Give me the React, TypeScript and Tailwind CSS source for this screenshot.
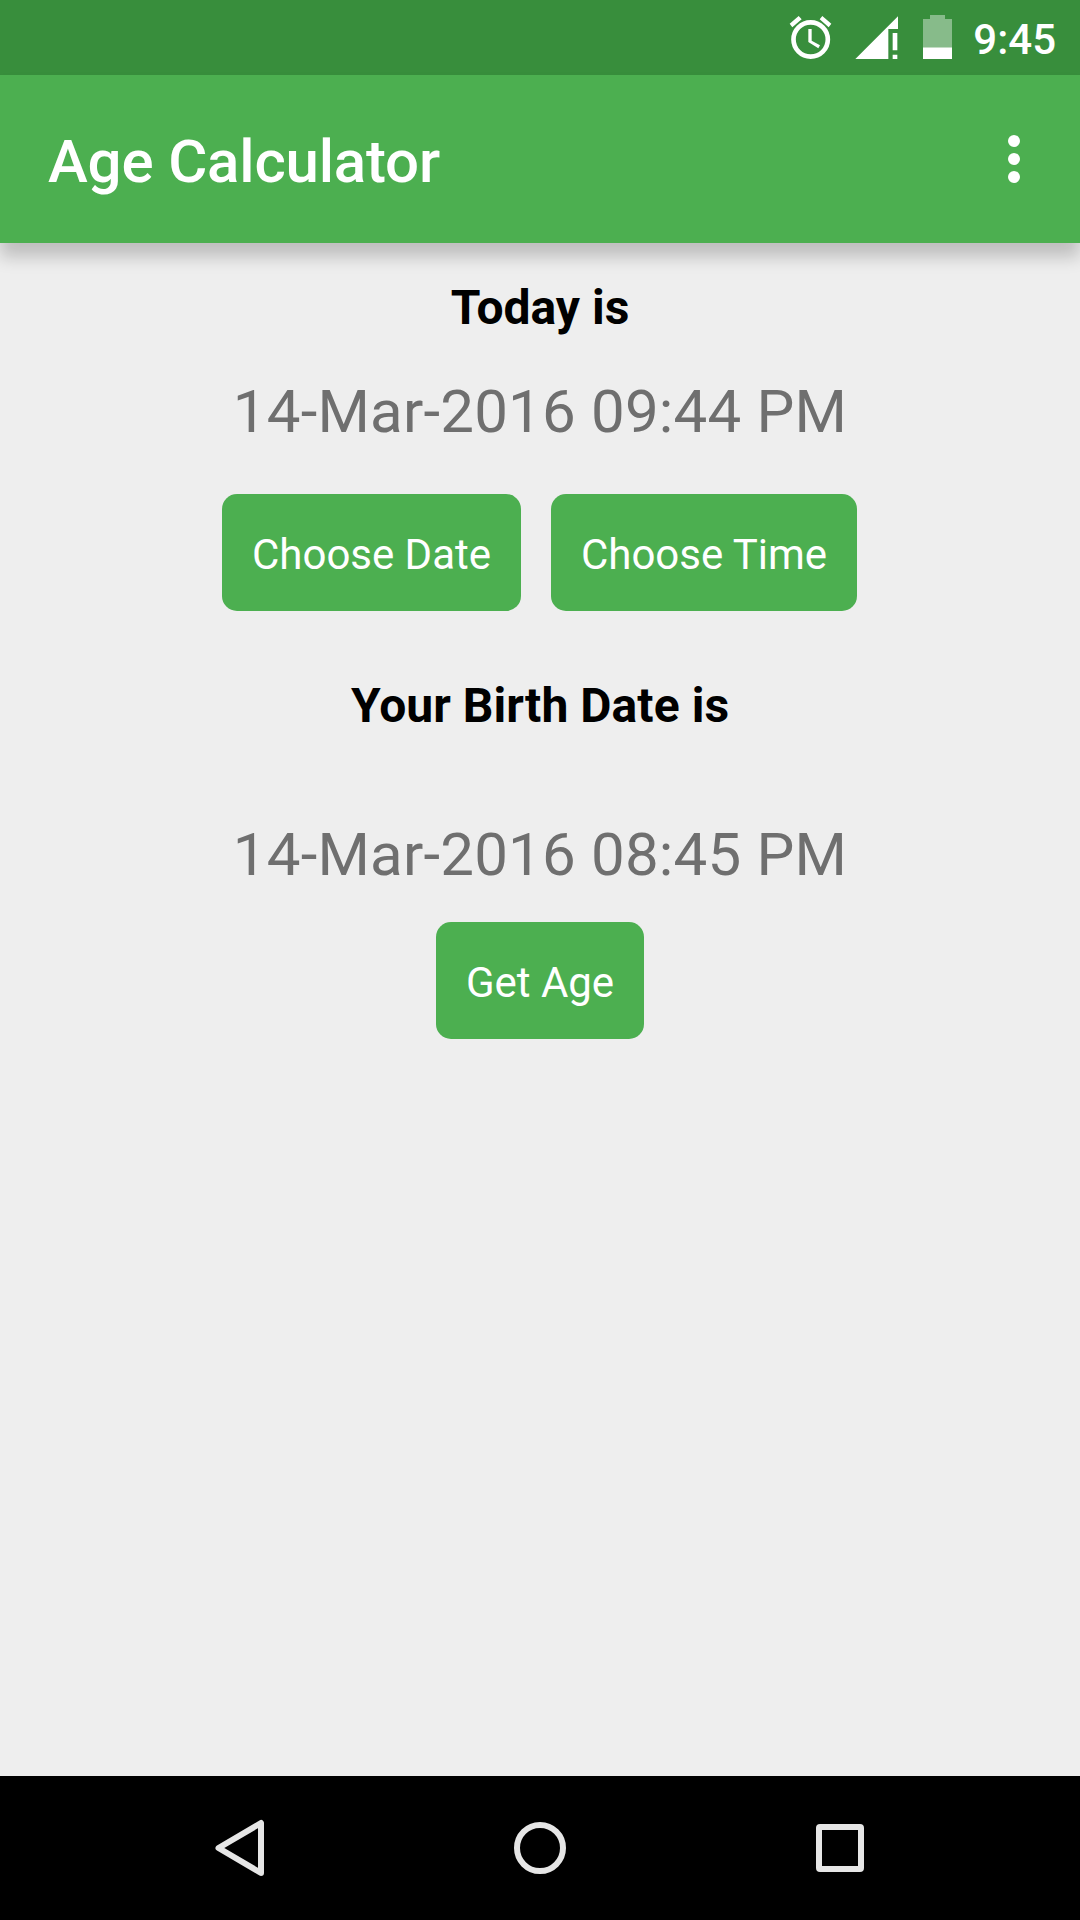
import type { ReactNode } from "react";

function AlarmIcon() {
  return (
    <svg className="h-[75px] w-[43px]" viewBox="57 0 129 225" fill="#fff">
      <circle cx="122" cy="118.5" r="51.5" fill="none" stroke="#fff" strokeWidth="14" />
      <path d="M59 71 86 48 95 58 67 82zM184 71 157 48 149 58 176 82z" />
      <path d="M115 87h10v35l25 14-5 9-30-19z" />
    </svg>
  );
}

function SignalIcon() {
  return (
    <svg className="h-[75px] w-[44px]" viewBox="255 0 132 225" fill="#fff">
      <path d="M256 177 384 49v38h-29v90z" />
      <path d="M368 99h14v52h-14zM368 164h14v13h-14z" />
    </svg>
  );
}

function BatteryIcon() {
  return (
    <svg className="h-[75px] w-[31px]" viewBox="456 0 93 225" fill="#fff">
      <path d="M459 142V57h21V45h45v12h21v85z" fillOpacity="0.4" />
      <path d="M459 142h87v35h-87z" />
    </svg>
  );
}

function StatusBar() {
  return (
    <div className="flex h-[75px] items-start justify-end bg-[#388e3c] pr-[24px] text-white">
      <AlarmIcon />
      <div className="ml-[23px]">
        <SignalIcon />
      </div>
      <div className="ml-[23px]">
        <BatteryIcon />
      </div>
      <span className="ml-[20px] pt-[15px] text-[42px] leading-[49px] font-medium">9:45</span>
    </div>
  );
}

function AppBar() {
  return (
    <header className="relative flex h-[168px] items-start justify-between bg-[#4caf50] pl-[48px] text-white shadow-[0_14px_16px_rgba(0,0,0,0.2)]">
      <h1 className="pt-[52px] text-[60px] leading-[70px] font-medium tracking-[-0.18px]">Age Calculator</h1>
      <button className="mt-[60px] mr-[60px] flex flex-col gap-[6px]" aria-label="More options">
        <span className="size-3 rounded-full bg-white" />
        <span className="size-3 rounded-full bg-white" />
        <span className="size-3 rounded-full bg-white" />
      </button>
    </header>
  );
}

function ActionButton({ width, children }: { width: string; children: ReactNode }) {
  return (
    <button
      className={`${width} rounded-[15px] bg-[#4caf50] pt-[36px] pb-[32px] text-center text-[42px] leading-[49px] tracking-[-0.02px] whitespace-nowrap text-white`}
    >
      {children}
    </button>
  );
}

function NavBar() {
  return (
    <nav className="flex h-[144px] justify-center gap-[200px] bg-black">
      <svg className="h-[144px] w-[100px]" viewBox="0 0 100 144" fill="none" stroke="#e6e6e6" strokeWidth="6" strokeLinejoin="round">
        <path d="M28.5 72 71 47v50z" />
      </svg>
      <svg className="h-[144px] w-[100px]" viewBox="0 0 100 144" fill="none" stroke="#e6e6e6" strokeWidth="6">
        <circle cx="50" cy="72" r="23" />
      </svg>
      <svg className="h-[144px] w-[100px]" viewBox="0 0 100 144">
        <path fill="#e6e6e6" fillRule="evenodd" d="M30 48h40a4 4 0 0 1 4 4v40a4 4 0 0 1-4 4H30a4 4 0 0 1-4-4V52a4 4 0 0 1 4-4zM32 54v36h36V54z" />
      </svg>
    </nav>
  );
}

export default function App() {
  return (
    <div className="flex h-[1920px] w-[1080px] flex-col bg-[#eeeeee] font-['Roboto',sans-serif]">
      <StatusBar />
      <AppBar />
      <main className="flex flex-1 flex-col items-center pt-[37px]">
        <h2 className="text-[48px] leading-[56px] font-bold text-black">Today is</h2>
        <p className="mt-[41px] text-[60px] leading-[70px] tracking-[0.2px] text-[#6f6f6f]">14-Mar-2016 09:44 PM</p>
        <div className="mt-[47px] flex gap-[30px] pr-px">
          <ActionButton width="w-[299px]">Choose Date</ActionButton>
          <ActionButton width="w-[306px]">Choose Time</ActionButton>
        </div>
        <h2 className="mt-[67px] text-[48px] leading-[56px] font-bold tracking-[0.06px] text-black">Your Birth Date is</h2>
        <p className="mt-[86px] mb-[32px] text-[60px] leading-[70px] tracking-[0.2px] text-[#6f6f6f]">14-Mar-2016 08:45 PM</p>
        <ActionButton width="w-[208px]">Get Age</ActionButton>
      </main>
      <NavBar />
    </div>
  );
}
